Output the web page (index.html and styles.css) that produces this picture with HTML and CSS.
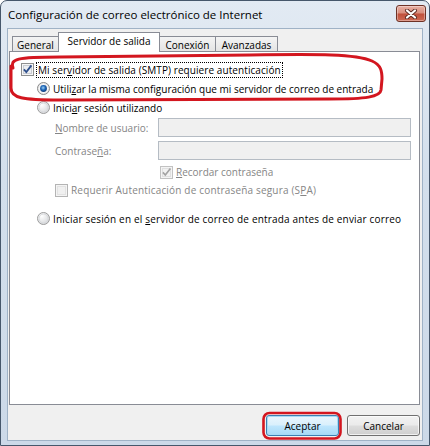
FILE: index.html
```html
<!DOCTYPE html>
<html lang="es">
<head>
<meta charset="utf-8">
<title>Configuración de correo electrónico de Internet</title>
<link rel="stylesheet" href="styles.css">
</head>
<body>
<div class="window">
  <div class="titlebar">
    <span class="title">Configuración de correo electrónico de Internet</span>
    <div class="close">
      <svg width="14" height="10" viewBox="0 0 14 10"><path d="M3 1.5 L11 8.5 M11 1.5 L3 8.5" stroke="#5a2a22" stroke-width="4" stroke-linecap="round"/><path d="M3 1.5 L11 8.5 M11 1.5 L3 8.5" stroke="#ffffff" stroke-width="2.2" stroke-linecap="round"/></svg>
    </div>
  </div>
  <div class="body">
    <div class="tabs">
      <div class="tab t-general">General</div>
      <div class="tab active t-servidor">Servidor de salida</div>
      <div class="tab t-conexion">Conexión</div>
      <div class="tab t-avanzadas">Avanzadas</div>
    </div>
    <div class="panel">
      <div class="row r1">
        <svg class="box" viewBox="0 0 13 13"><rect x="0.5" y="0.5" width="12" height="12" fill="#f6f6f6" stroke="#8e8f8f"/><rect x="2.5" y="2.5" width="8" height="8" fill="#eceef1" stroke="#c9ccd2"/><path d="M2.9 6.4 L5.3 9.1 L10.4 2.4" fill="none" stroke="#2d4f8c" stroke-width="1.8"/></svg>
        <span class="lbl focus wide1">Mi ser<u>v</u>idor de salida (SMTP) requiere autenticación</span>
      </div>
      <div class="row r2 ind1">
        <svg class="box" viewBox="0 0 13 13"><defs><radialGradient id="rg1" cx="0.45" cy="0.4" r="0.6"><stop offset="0" stop-color="#9fd3f5"/><stop offset="0.55" stop-color="#1f66b8"/><stop offset="1" stop-color="#0d3c7a"/></radialGradient></defs><circle cx="6.5" cy="6.5" r="6" fill="#e9e9e9" stroke="#8a8a8a"/><circle cx="6.5" cy="6.5" r="4.6" fill="#f7f7f7"/><circle cx="6.5" cy="6.5" r="3.4" fill="url(#rg1)"/></svg>
        <span class="lbl">Utili<u>z</u>ar la misma configuración que mi servidor de correo de entrada</span>
      </div>
      <div class="row r3 ind1">
        <svg class="box" viewBox="0 0 13 13"><defs><radialGradient id="rg2" cx="0.35" cy="0.3" r="0.8"><stop offset="0" stop-color="#ffffff"/><stop offset="1" stop-color="#d2d4d7"/></radialGradient></defs><circle cx="6.5" cy="6.5" r="6" fill="url(#rg2)" stroke="#9c9c9c"/><circle cx="6.5" cy="6.5" r="4.5" fill="none" stroke="#d8dadd"/></svg>
        <span class="lbl">Inici<u>a</u>r sesión utilizando</span>
      </div>
      <div class="row r4 ind2">
        <span class="lbl dis fieldlbl"><u>N</u>ombre de usuario:</span>
        <span class="input"></span>
      </div>
      <div class="row r5 ind2">
        <span class="lbl dis fieldlbl">Contrase<u>ñ</u>a:</span>
        <span class="input"></span>
      </div>
      <div class="row r6 ind3">
        <svg class="box" viewBox="0 0 13 13"><rect x="0.5" y="0.5" width="12" height="12" fill="#f4f4f4" stroke="#c2c2c2"/><rect x="2.5" y="2.5" width="8" height="8" fill="#f2f2f2" stroke="#e0e0e0"/><path d="M2.9 6.4 L5.3 9.1 L10.4 2.4" fill="none" stroke="#a3a3a3" stroke-width="1.6"/></svg>
        <span class="lbl dis"><u>R</u>ecordar contraseña</span>
      </div>
      <div class="row r7 ind2">
        <svg class="box" viewBox="0 0 13 13"><rect x="0.5" y="0.5" width="12" height="12" fill="#f4f4f4" stroke="#b4b4b4"/><rect x="2.5" y="2.5" width="8" height="8" fill="#f0f0f0" stroke="#e2e2e2"/></svg>
        <span class="lbl dis wide2">Requerir Autenticación de contraseña segura (S<u>P</u>A)</span>
      </div>
      <div class="row r8 ind1">
        <svg class="box" viewBox="0 0 13 13"><defs><radialGradient id="rg3" cx="0.35" cy="0.3" r="0.8"><stop offset="0" stop-color="#ffffff"/><stop offset="1" stop-color="#d2d4d7"/></radialGradient></defs><circle cx="6.5" cy="6.5" r="6" fill="url(#rg3)" stroke="#9c9c9c"/><circle cx="6.5" cy="6.5" r="4.5" fill="none" stroke="#d8dadd"/></svg>
        <span class="lbl wide2">Iniciar sesión en el <u>s</u>ervidor de correo de entrada antes de enviar correo</span>
      </div>
    </div>
    <div class="buttons">
      <div class="btn default">Aceptar</div>
      <div class="btn">Cancelar</div>
    </div>
  </div>
  <svg class="annot" width="430" height="446" viewBox="0 0 430 446">
    <path d="M13 68 C 10 59, 16 57, 60 57 L 250 55 C 320 54, 356 54, 372 61 C 381 65, 382 71, 382 79 L 381 90 C 380 97, 366 99, 330 99 L 60 100 C 22 100, 11 98, 11 88 L 11 66" fill="none" stroke="#d3161f" stroke-width="3" stroke-linecap="round"/>
    <rect x="263.5" y="413" width="77" height="25.5" rx="6" fill="none" stroke="#d3161f" stroke-width="2.6"/>
  </svg>
</div>
</body>
</html>
```
FILE: styles.css
```css
html, body {
  margin: 0;
  padding: 0;
  background: #ffffff;
}

.window {
  position: relative;
  width: 430px;
  height: 446px;
  box-sizing: border-box;
  border: 1px solid #46576b;
  border-radius: 7px 7px 0 0;
  background: linear-gradient(180deg, #e2eaf3 0%, #d3dfec 40%, #ccd9e8 100%);
  padding: 0 6px 4px 6px;
  display: flex;
  flex-direction: column;
  font-family: "Open Sans", "Noto Sans", sans-serif;
  font-size: 10px;
  color: #000;
}

.titlebar {
  height: 27px;
  display: flex;
  align-items: center;
  justify-content: space-between;
  padding-left: 1px;
}

.title {
  font-size: 11.5px;
  color: #000;
  margin-top: -1px;
}

.close {
  align-self: flex-start;
  width: 30px;
  height: 17px;
  box-sizing: border-box;
  margin-top: 4px;
  margin-right: -3px;
  border: 1px solid #6e3226;
  border-radius: 3px;
  background: linear-gradient(180deg, #e7b0a4 0%, #d98e7d 48%, #c0503b 52%, #cd6a54 100%);
  box-shadow: inset 0 0 0 1px rgba(255, 255, 255, 0.35);
  display: flex;
  align-items: center;
  justify-content: center;
}

.body {
  flex: 1;
  background: #f0f0f0;
  border: 1px solid #9fb2c6;
  padding: 3px 2px 4px 1px;
  display: flex;
  flex-direction: column;
}

.tabs {
  display: flex;
  align-items: flex-end;
  padding-left: 3px;
  height: 19px;
  position: relative;
  z-index: 1;
}

.tab {
  height: 15px;
  box-sizing: border-box;
  border: 1px solid #898c95;
  border-bottom: none;
  background: linear-gradient(180deg, #f4f4f4, #e4e4e4);
  display: flex;
  align-items: center;
  justify-content: center;
  margin-left: -1px;
  padding-top: 1px;
}

.tab:first-child { margin-left: 0; }

.tab.active {
  height: 20px;
  background: #ffffff;
  margin-bottom: -1px;
  padding-top: 0;
  padding-bottom: 3px;
  z-index: 2;
}

.t-general { width: 47px; }
.t-servidor { width: 102px; }
.t-conexion { width: 57px; }
.t-avanzadas { width: 63px; }

.panel {
  flex: 1;
  background: #ffffff;
  border: 1px solid #898c95;
  padding: 8px 0 0 11px;
  display: flex;
  flex-direction: column;
}

.row {
  display: flex;
  align-items: center;
  height: 19px;
  white-space: nowrap;
}

.box {
  width: 13px;
  height: 13px;
  flex: none;
  margin-right: 3px;
}

.ind1 { padding-left: 16px; }
.ind2 { padding-left: 34px; }
.ind3 { padding-left: 139px; }

.r4 { height: 21px; }
.r5 { height: 21px; margin-top: 2px; }
.r6 { height: 18px; margin-top: 2px; }
.r7 { height: 18px; }
.r8 { margin-top: 10px; }

.lbl u { text-decoration: underline; }

.wide1 { letter-spacing: 0.08px; }
.wide2 { letter-spacing: 0.18px; }

.focus {
  outline: 1px dotted #000;
  outline-offset: 0;
  padding: 0 1px;
}

.dis { color: #858585; }

.fieldlbl { width: 103px; }

.input {
  width: 253px;
  height: 19px;
  box-sizing: border-box;
  border: 1px solid #b5bcc4;
  background: #f0f0f0;
}

.buttons {
  display: flex;
  justify-content: flex-end;
  gap: 8px;
  margin-top: 10px;
  height: 21px;
}

.btn {
  width: 73px;
  height: 21px;
  box-sizing: border-box;
  border: 1px solid #707070;
  border-radius: 3px;
  background: linear-gradient(180deg, #f2f2f2 0%, #ebebeb 48%, #dddddd 52%, #cfcfcf 100%);
  box-shadow: inset 0 0 0 1px rgba(255, 255, 255, 0.7);
  display: flex;
  align-items: center;
  justify-content: center;
}

.btn.default {
  border-color: #3c7fb1;
  background: linear-gradient(180deg, #eaf6fd 0%, #d9f0fc 48%, #bee6fd 52%, #a7d9f5 100%);
  box-shadow: inset 0 0 0 1px #a6dbf5;
}

.annot {
  position: absolute;
  left: -1px;
  top: -1px;
  pointer-events: none;
  z-index: 5;
}
```
